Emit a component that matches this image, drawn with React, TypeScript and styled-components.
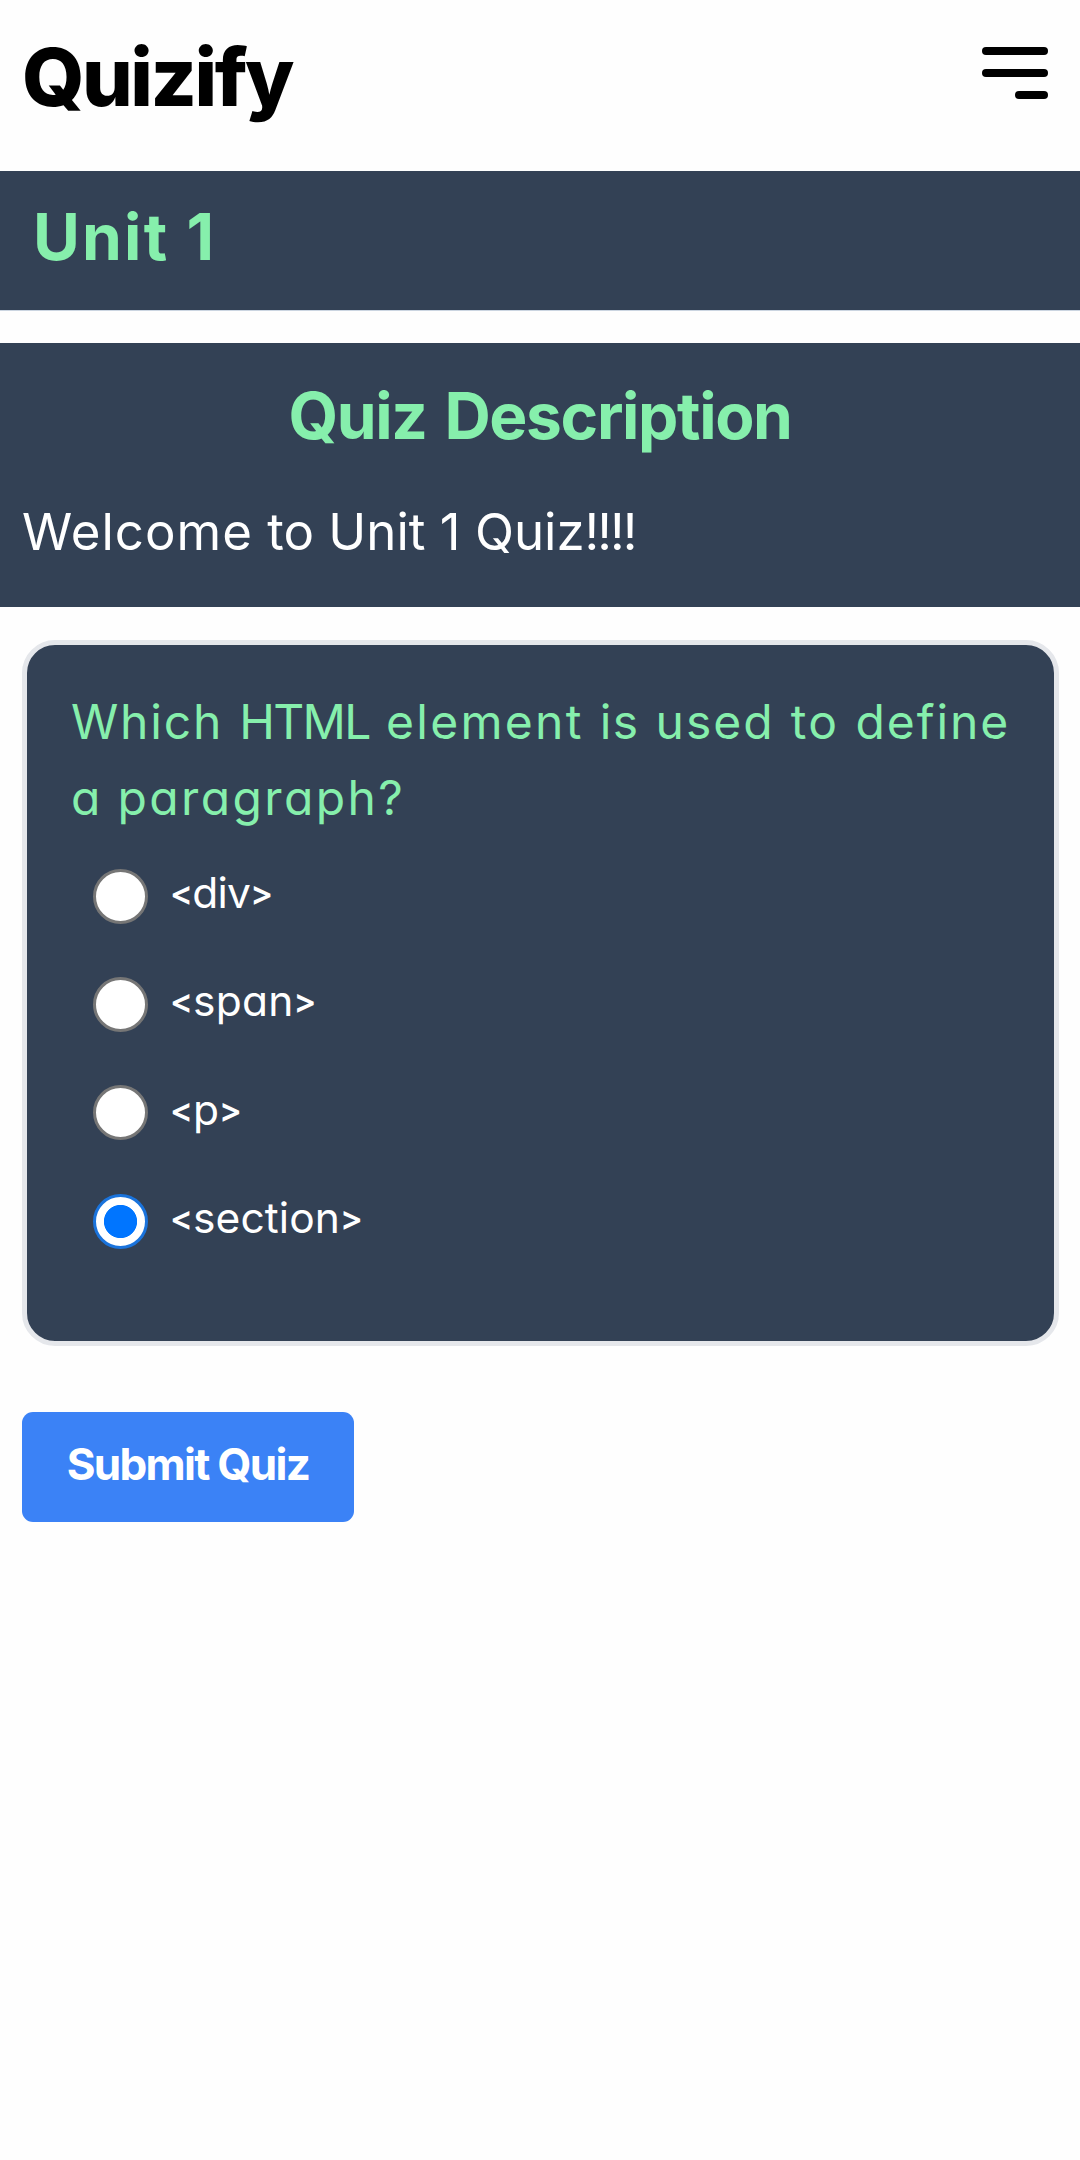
import React, { Fragment, useState } from "react";
import styled, { createGlobalStyle } from "styled-components";

const GlobalStyle = createGlobalStyle`
  *, *::before, *::after { box-sizing: border-box; }
  body {
    margin: 0;
    background: #fefefe;
    font-family: "Inter", "Liberation Sans", sans-serif;
    font-feature-settings: "cv11";
  }
`;

const Page = styled.div`
  min-height: 2160px;
  background: #fefefe;
`;

const Header = styled.header`
  display: flex;
  justify-content: space-between;
  align-items: flex-start;
  height: 171px;
  padding: 22px 32px 0 22px;
`;

const Logo = styled.h1`
  margin: 0;
  font-size: 80px;
  font-weight: 800;
  line-height: 110px;
  letter-spacing: -2.5px;
  color: #000;
`;

const MenuButton = styled.button`
  display: flex;
  flex-direction: column;
  align-items: flex-end;
  gap: 14px;
  margin: 0;
  padding: 25px 0 0;
  border: 0;
  background: none;
`;

const MenuBar = styled.span<{ $width: number }>`
  width: ${(p) => p.$width}px;
  height: 8px;
  border-radius: 4px;
  background: #000;
`;

const UnitBand = styled.section`
  height: 140px;
  padding: 16px 33px 0;
  border-bottom: 1px solid #cbd5e1;
  background: #334155;
`;

const UnitTitle = styled.h2`
  margin: 0;
  font-size: 64px;
  font-weight: 700;
  line-height: 99px;
  letter-spacing: 2.2px;
  color: #86efac;
`;

const DescriptionBand = styled.section`
  height: 264px;
  margin-top: 32px;
  padding: 23px 22px 0;
  background: #334155;
`;

const DescriptionTitle = styled.h2`
  margin: 0 0 28px;
  font-size: 64px;
  font-weight: 700;
  line-height: 99px;
  letter-spacing: -1.35px;
  word-spacing: 4px;
  text-align: center;
  color: #86efac;
`;

const DescriptionText = styled.p`
  margin: 0;
  font-size: 51px;
  font-weight: 400;
  line-height: 78px;
  color: #fff;
`;

const Card = styled.section`
  height: 706px;
  margin: 33px 21px 0 22px;
  padding: 39px 44px 0;
  border: 5px solid #e5e7eb;
  border-radius: 33px;
  background: #334155;
`;

const Question = styled.p`
  margin: 0;
  font-size: 48px;
  font-weight: 400;
  line-height: 76px;
  text-align: justify;
  color: #86efac;
`;

const Word = styled.span<{ $tracking: number }>`
  letter-spacing: ${(p) => p.$tracking}px;
`;

const Options = styled.div`
  display: flex;
  flex-direction: column;
  margin-top: 6px;
  padding-left: 22px;
`;

const Option = styled.label`
  display: flex;
  align-items: center;
  gap: 22px;
  height: 108.3px;
`;

const Radio = styled.input`
  appearance: none;
  flex: none;
  width: 55px;
  height: 55px;
  margin: 0;
  border: 3px solid #767676;
  border-radius: 50%;
  background: #fff;

  &:checked {
    border-color: #1a73dc;
    background: radial-gradient(circle, #0075ff 16.2px, #fff 17px);
  }
`;

const OptionText = styled.span<{ $tracking: number }>`
  padding-bottom: 6px;
  font-size: 42.5px;
  font-weight: 400;
  line-height: 60px;
  letter-spacing: ${(p) => p.$tracking}px;
  white-space: nowrap;
  color: #fff;
`;

const Bracket = styled.span`
  font-size: 34px;
  font-weight: 600;
  line-height: 1;
  vertical-align: 3px;
`;

const SubmitButton = styled.button`
  display: flex;
  align-items: center;
  justify-content: center;
  width: 332px;
  height: 110px;
  margin: 66px 0 0 22px;
  padding: 0 0 7px;
  border: 0;
  border-radius: 11px;
  background: #3b82f6;
  font: inherit;
  font-size: 44px;
  font-weight: 700;
  letter-spacing: -1.7px;
  color: #fff;
`;

const question = [
  { text: "Which", tracking: 1.8 },
  { text: "HTML", tracking: -1.6 },
  { text: "element", tracking: 2.3 },
  { text: "is", tracking: 1.4 },
  { text: "used", tracking: 2 },
  { text: "to", tracking: 2.4 },
  { text: "define", tracking: 1.9 },
  { text: "a", tracking: 3.5 },
  { text: "paragraph?", tracking: 2.4 },
];

const options = [
  { tag: "div", tracking: -0.7 },
  { tag: "span", tracking: 0.2 },
  { tag: "p", tracking: 0 },
  { tag: "section", tracking: 0.1 },
];

export default function App() {
  const [selected, setSelected] = useState("section");

  return (
    <Page>
      <GlobalStyle />
      <Header>
        <Logo>Quizify</Logo>
        <MenuButton aria-label="Menu">
          <MenuBar $width={66} />
          <MenuBar $width={66} />
          <MenuBar $width={33} />
        </MenuButton>
      </Header>
      <UnitBand>
        <UnitTitle>Unit 1</UnitTitle>
      </UnitBand>
      <DescriptionBand>
        <DescriptionTitle>Quiz Description</DescriptionTitle>
        <DescriptionText>
          <Word $tracking={1}>Welcome</Word> to Unit 1 Quiz
          <Word $tracking={-1.9}>!!!!</Word>
        </DescriptionText>
      </DescriptionBand>
      <Card>
        <Question>
          {question.map(({ text, tracking }, i) => (
            <Fragment key={text}>
              {i > 0 && " "}
              <Word $tracking={tracking}>{text}</Word>
            </Fragment>
          ))}
        </Question>
        <Options>
          {options.map(({ tag, tracking }) => (
            <Option key={tag}>
              <Radio
                type="radio"
                name="answer"
                checked={selected === tag}
                onChange={() => setSelected(tag)}
              />
              <OptionText $tracking={tracking}>
                <Bracket>&lt;</Bracket>
                {tag}
                <Bracket>&gt;</Bracket>
              </OptionText>
            </Option>
          ))}
        </Options>
      </Card>
      <SubmitButton>Submit Quiz</SubmitButton>
    </Page>
  );
}
